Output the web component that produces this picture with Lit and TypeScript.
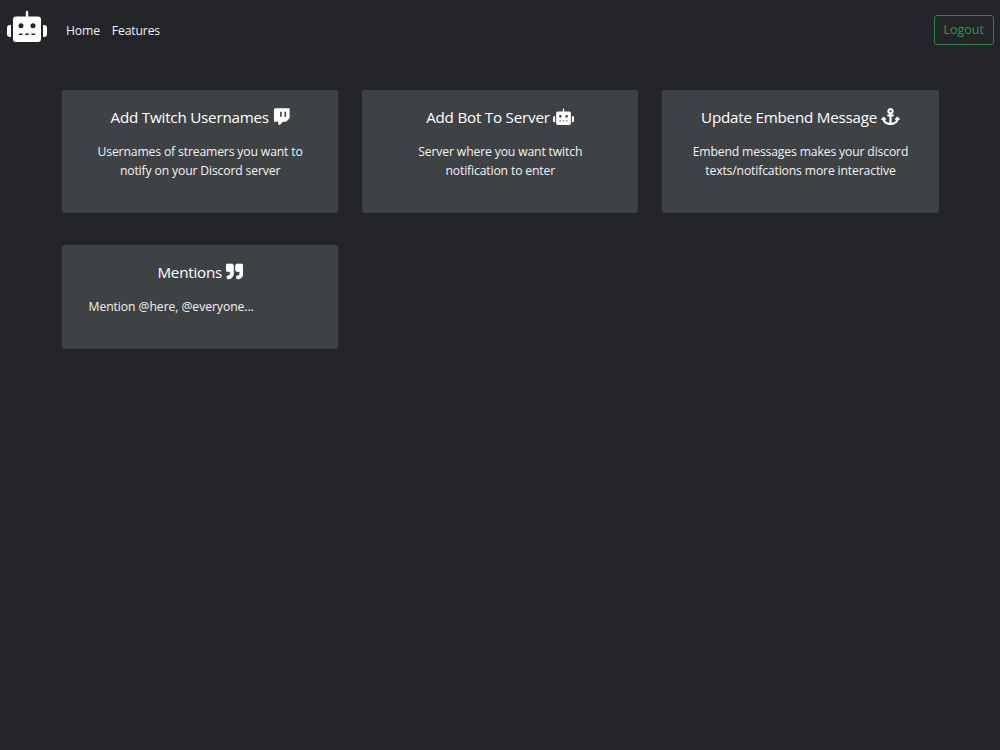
import { LitElement, html, css, svg } from 'lit';
import { customElement } from 'lit/decorators.js';

const robot = svg`<path fill-rule="evenodd" d="M9 6.5H31a3 3 0 0 1 3 3V29a3 3 0 0 1-3 3H9a3 3 0 0 1-3-3V9.5a3 3 0 0 1 3-3ZM18.8 6.5V2a1.2 1.2 0 0 1 2.4 0V6.5ZM11.5 15.7a2.5 2.5 0 1 0 5 0a2.5 2.5 0 1 0-5 0ZM23.5 15.7a2.5 2.5 0 1 0 5 0a2.5 2.5 0 1 0-5 0ZM12 23.5H15.5V25H12ZM18.2 23.5H21.8V25H18.2ZM24.5 23.5H28V25H24.5ZM4 15V27H3a3 3 0 0 1-3-3V18a3 3 0 0 1 3-3ZM36 15H37a3 3 0 0 1 3 3V24a3 3 0 0 1-3 3H36Z"/>`;

const twitch = svg`<path fill-rule="evenodd" d="M70 10H500V310L395 415H300L215 505H160V415H30V90C30 40 40 10 70 10ZM215 115H265V265H215ZM345 115H395V265H345Z"/>`;

const anchor = svg`<path d="M12.971 352h32.394C67.172 454.735 181.944 512 288 512c106.229 0 220.853-57.38 242.635-160h32.394c10.691 0 16.045-12.926 8.485-20.485l-67.029-67.029c-4.686-4.686-12.284-4.686-16.971 0l-67.029 67.029c-7.56 7.56-2.206 20.485 8.485 20.485h35.146c-20.29 54.317-84.963 86.588-144.117 94.015V256h52c6.627 0 12-5.373 12-12v-40c0-6.627-5.373-12-12-12h-52v-5.47c37.281-13.178 63.995-48.725 64-90.518C384.005 43.772 341.605.738 289.37.01 235.723-.739 192 42.525 192 96c0 41.798 26.716 77.35 64 90.53V192h-52c-6.627 0-12 5.373-12 12v40c0 6.627 5.373 12 12 12h52v190.015c-58.936-7.399-123.82-39.679-144.117-94.015h35.146c10.691 0 16.045-12.926 8.485-20.485l-67.029-67.029c-4.686-4.686-12.284-4.686-16.971 0L4.485 331.515C-3.074 339.074 2.28 352 12.971 352zM288 64c17.645 0 32 14.355 32 32s-14.355 32-32 32-32-14.355-32-32 14.355-32 32-32z"/>`;

const quote = svg`<path stroke="currentColor" stroke-width="22" d="M464 32H336c-26.5 0-48 21.5-48 48v128c0 26.5 21.5 48 48 48h80v64c0 35.3-28.7 64-64 64h-8c-13.3 0-24 10.7-24 24v48c0 13.3 10.7 24 24 24h8c88.4 0 160-71.6 160-160V80c0-26.5-21.5-48-48-48zm-288 0H48C21.5 32 0 53.5 0 80v128c0 26.5 21.5 48 48 48h80v64c0 35.3-28.7 64-64 64h-8c-13.3 0-24 10.7-24 24v48c0 13.3 10.7 24 24 24h8c88.4 0 160-71.6 160-160V80c0-26.5-21.5-48-48-48z"/>`;

const icon = (body: unknown, vb: string, w: number) => html`<svg class="ico" viewBox=${vb} width=${w} height="17" fill="currentColor" aria-hidden="true">${body}</svg>`;

@customElement('app-root')
export class AppRoot extends LitElement {
  static styles = css`
    :host {
      display: block;
      min-height: 750px;
      background: #232529;
      color: #fff;
      font-family: 'Open Sans', 'Noto Sans', sans-serif;
      font-size: 13px;
    }

    .nav {
      display: flex;
      align-items: flex-start;
      height: 60px;
      padding: 10px 6px 0 7px;
      box-sizing: border-box;
    }

    .logo {
      display: block;
      width: 40px;
      height: 32px;
      margin-right: 19px;
    }

    .link {
      color: #f0f0f0;
      margin: 11px 12px 0 0;
      font-size: 12.2px;
      line-height: 19px;
      letter-spacing: -0.15px;
    }

    .logout {
      margin: 4.5px 0 0 auto;
      width: 60.5px;
      height: 30px;
      box-sizing: border-box;
      border: 1px solid #2a8344;
      border-radius: 3px;
      color: #2a9a4c;
      background: transparent;
      font: inherit;
      font-size: 12.5px;
      padding: 0;
    }

    .grid {
      display: grid;
      grid-template-columns: repeat(3, 276.2px);
      column-gap: 24px;
      row-gap: 32px;
      align-items: start;
      padding: 30px 0 0 62px;
    }

    .card {
      background: #3e4245;
      border-radius: 3px;
      padding: 16px 26px 24px;
      box-sizing: border-box;
    }

    .card.tall {
      height: 123px;
    }

    .card.short {
      height: 104px;
    }

    h5 {
      margin: 0 0 14px;
      font-size: 15.2px;
      font-weight: 400;
      line-height: 22px;
      letter-spacing: -0.22px;
      text-align: center;
      color: #fff;
    }

    .ico {
      vertical-align: -2px;
    }

    p {
      margin: 0;
      font-size: 12.2px;
      line-height: 19px;
      letter-spacing: -0.15px;
      color: #f2f2f2;
    }

    p.center {
      text-align: center;
    }

    p.left {
      padding-left: 0.5px;
      letter-spacing: -0.07px;
    }
  `;

  render() {
    return html`
      <nav class="nav">
        <svg class="logo" viewBox="0 0 40 32" fill="#fff" aria-label="logo">${robot}</svg>
        <a class="link">Home</a>
        <a class="link">Features</a>
        <button class="logout">Logout</button>
      </nav>
      <main class="grid">
        <section class="card tall">
          <h5>Add Twitch Usernames ${icon(twitch, '0 0 512 512', 17)}</h5>
          <p class="center">Usernames of streamers you want to<br />notify on your Discord server</p>
        </section>
        <section class="card tall">
          <h5>Add Bot To Server ${icon(robot, '0 0 40 32', 21)}</h5>
          <p class="center">Server where you want twitch<br />notification to enter</p>
        </section>
        <section class="card tall">
          <h5>Update Embend Message ${icon(anchor, '0 0 576 512', 19)}</h5>
          <p class="center">Embend messages makes your discord<br />texts/notifcations more interactive</p>
        </section>
        <section class="card short">
          <h5>Mentions ${icon(quote, '0 0 512 512', 17)}</h5>
          <p class="left">Mention @here, @everyone...</p>
        </section>
      </main>
    `;
  }
}
